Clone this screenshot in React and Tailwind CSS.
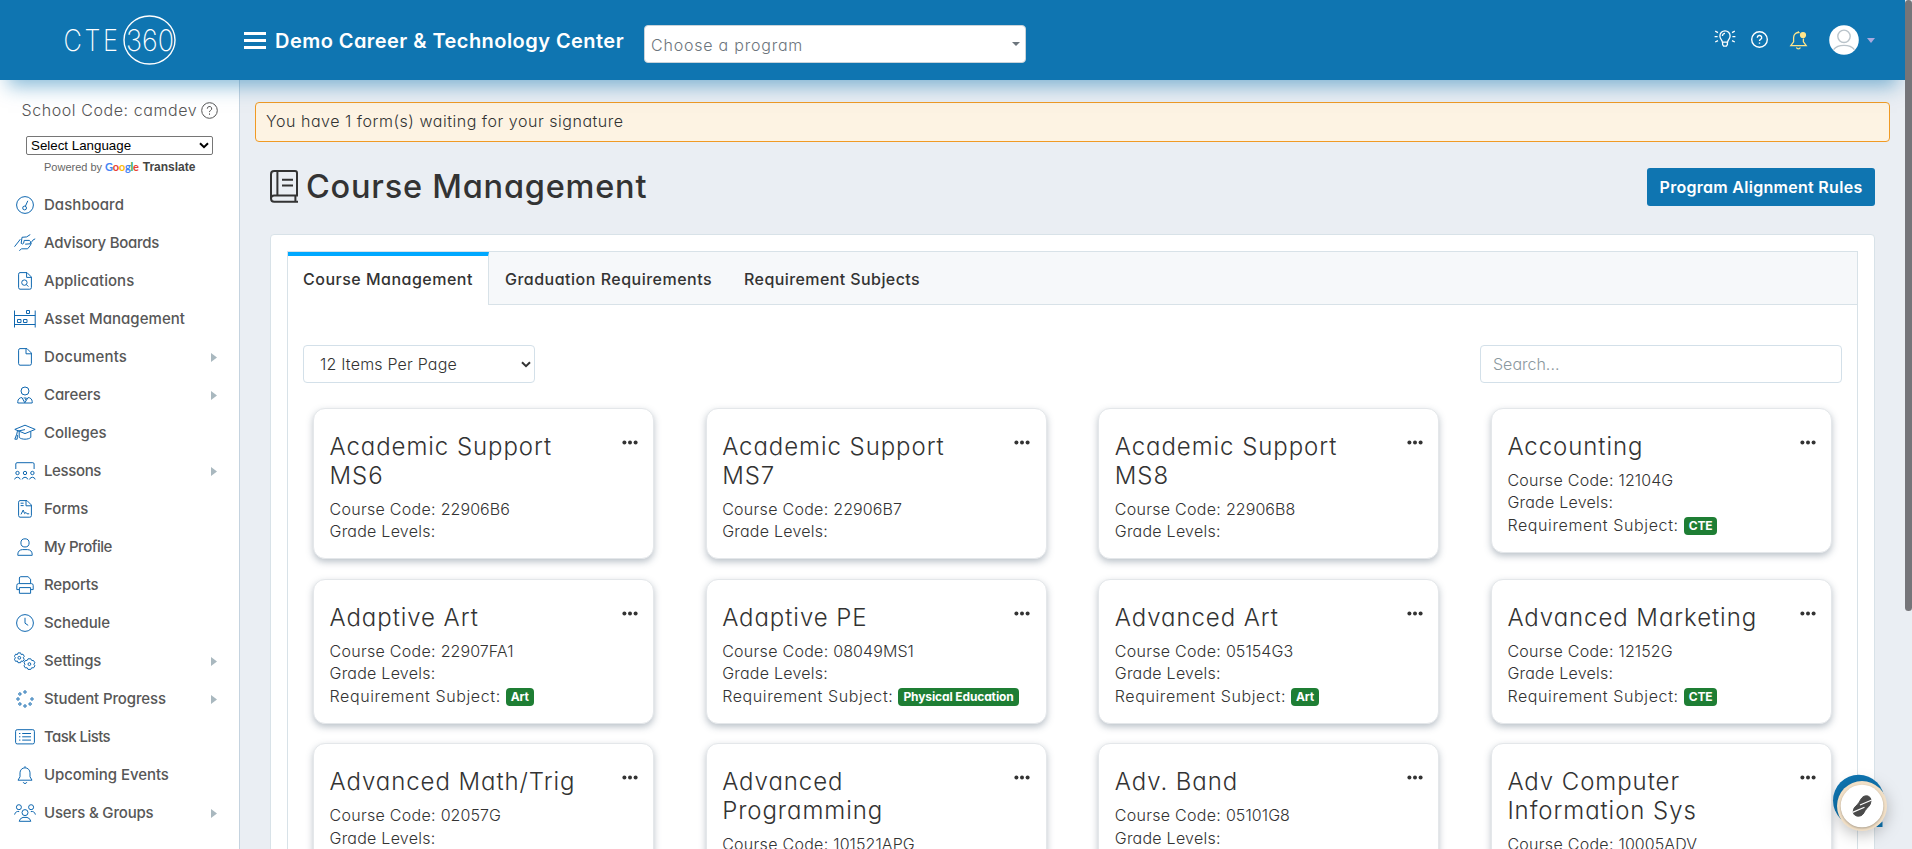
import React from "react";

const ICONS = {
  gauge: (
    <>
      <circle cx="11" cy="9" r="8.4" />
      <circle cx="10.6" cy="12" r="1.9" />
      <path d="M11.4 10.2 13.8 4.8" />
    </>
  ),
  hands: (
    <>
      <path d="M.5 12.7 5 7 6.3 5.2M8 3.3 12.7 2.9 16.3.5M17.7 7.9 18.8 6.2 21.2 4.8M5.3 16.6 7.6 14.8H13.6L16.3 11.5 17.5 8.5" />
      <path d="M8 3.3 7.2 9.3 8.4 10 9.6 9.3 10.2 6.4H15.4L16.6 7.8 16.2 9.8 11.2 10.2" />
    </>
  ),
  fileSearch: (
    <>
      <path d="M6 .6H13L17.4 5V15.6A1.6 1.6 0 0 1 15.8 17.2H6A1.6 1.6 0 0 1 4.6 15.6V2.2A1.6 1.6 0 0 1 6 .6ZM12.6.8V5.4H17.2" />
      <circle cx="10.4" cy="10.6" r="2.7" />
      <path d="M12.4 12.6 14.4 14.6" />
    </>
  ),
  shelves: (
    <>
      <path d="M.5.5V17.5M21.2.5V17.5M.5 5.5H21.2M.5 14.5H21.2" />
      <path d="M12.5.5H15.5V3.5H12.5ZM3.5 9.5H7V12.5H3.5ZM9.5 9.5H13V12.5H9.5Z" />
    </>
  ),
  file: (
    <path d="M6 .6H13L17.4 5V15.6A1.6 1.6 0 0 1 15.8 17.2H6A1.6 1.6 0 0 1 4.6 15.6V2.2A1.6 1.6 0 0 1 6 .6ZM12 .8V5.8H17.2" />
  ),
  tie: (
    <>
      <circle cx="11" cy="5" r="4" />
      <path d="M3.8 17V15.6A4 4 0 0 1 8 11.6L10.8 16.8 14 11.6A4 4 0 0 1 18.2 15.6V17ZM9.6 12H12.4L11.2 14.4" />
    </>
  ),
  grad: (
    <>
      <path d="M.8 5.4 11 1.2 21.2 5.4 11 9.6Z" />
      <path d="M5.2 7.6V13.4C7.6 15.8 14.4 15.8 16.8 13.4V7.6M11 5.6 3.4 7.2 2.6 11M2.4 11 .8 15.2H3.2L3.4 11" />
    </>
  ),
  lessons: (
    <>
      <path d="M1.8 7V2A1.3 1.3 0 0 1 3 .7H18.8A1.3 1.3 0 0 1 20.1 2V7" />
      <circle cx="3.5" cy="11" r="1.7" />
      <circle cx="11" cy="11" r="1.7" />
      <circle cx="18.4" cy="11" r="1.7" />
      <path d="M.6 17.4A2.9 2.9 0 0 1 6.2 17.4M8.2 17.4A2.9 2.9 0 0 1 13.8 17.4M15.6 17.4A2.9 2.9 0 0 1 21.2 17.4" />
    </>
  ),
  form: (
    <>
      <path d="M6 .6H13L17.4 5V15.6A1.6 1.6 0 0 1 15.8 17.2H6A1.6 1.6 0 0 1 4.6 15.6V2.2A1.6 1.6 0 0 1 6 .6ZM12 .8V5.8H17.2" />
      <path d="M6.6 3.2H9.6M6.6 5.6H9.6M7 14.4 9.2 10 10.6 13.6 12 12.4 13 13.8H15.2" />
    </>
  ),
  user: (
    <>
      <circle cx="11" cy="4.9" r="4.1" />
      <path d="M3.8 17.3V16.2A5 5 0 0 1 8.6 11.6H13.4A5 5 0 0 1 18.2 16.2V17.3Z" />
    </>
  ),
  printer: (
    <>
      <path d="M5.4 7V2A1.4 1.4 0 0 1 6.8.7H14L16.6 3.2V7" />
      <path d="M5 13.6H2.8V9.4A1.8 1.8 0 0 1 4.6 7.6H17.4A1.8 1.8 0 0 1 19.2 9.4V13.6H17M5.4 11.6H16.6V17.3H5.4Z" />
    </>
  ),
  clock: (
    <>
      <circle cx="11" cy="9" r="8.4" />
      <path d="M11 3.8V9.2L14.2 11.4" />
    </>
  ),
  gears: (
    <>
      <path d="M4 .9H6.6L7.2 2.6 9 2.2 10.3 4.4 9.2 5.8 10.3 7.2 9 9.4 7.2 9 6.6 10.7H4L3.4 9 1.6 9.4.4 7.2 1.5 5.8.4 4.4 1.6 2.2 3.4 2.6Z" />
      <circle cx="5.3" cy="5.8" r="1.4" />
      <path d="M11.2 8.6 13.2 8.4 14 6.8H16.8L17.6 8.4 19.6 8.6 20.9 10.8 19.8 12.2 20.9 13.8 19.6 15.8 17.6 15.8 16.8 17.4H14L13.2 15.8 11.2 15.8 10 13.8 11 12.2 10 10.8Z" />
      <circle cx="15.4" cy="12.1" r="1.4" />
    </>
  ),
  dots: (
    <>
      <circle cx="11" cy="2" r="1.2" />
      <circle cx="5.9" cy="4" r="1.2" />
      <circle cx="4" cy="9" r="1.2" />
      <circle cx="5.9" cy="14" r="1.2" />
      <circle cx="11" cy="16" r="1.2" />
      <circle cx="16.1" cy="14" r="1.2" />
      <circle cx="18" cy="9" r="1.2" />
    </>
  ),
  list: (
    <>
      <rect x="1.6" y="1.7" width="18.8" height="14.2" rx="1.6" />
      <path d="M8.2 5.5H17M8.2 8.8H17M8.2 12.1H17M5 5.5H6.4M5 8.8H6.4M5 12.1H6.4" />
    </>
  ),
  bell: (
    <>
      <path d="M11 .2V1.6M4 14.2 6 10.8V6.8A5 5 0 0 1 16 6.8V10.8L18 14.2Z" />
      <path d="M9.2 16.2A1.9 1.9 0 0 0 12.8 16.2" />
    </>
  ),
  users: (
    <>
      <circle cx="4.9" cy="3.2" r="2.5" />
      <circle cx="17.1" cy="3.2" r="2.5" />
      <circle cx="11" cy="8.6" r="3" />
      <path d="M.6 10.6A3.6 3.6 0 0 1 5.2 7.6M21.4 10.6A3.6 3.6 0 0 0 16.8 7.6M5.2 17.3A5 5 0 0 1 9 13.4H13A5 5 0 0 1 16.8 17.3Z" />
    </>
  ),
};

const NAV = [
  ["gauge", "Dashboard", false, "tracking-[0.003em]"],
  ["hands", "Advisory Boards", false, "tracking-[-0.018em]"],
  ["fileSearch", "Applications", false, "tracking-[0.003em]"],
  ["shelves", "Asset Management", false, "tracking-[0.003em]"],
  ["file", "Documents", true, "tracking-[0.009em]"],
  ["tie", "Careers", true, "tracking-[-0.005em]"],
  ["grad", "Colleges", false, "tracking-[0em]"],
  ["lessons", "Lessons", true, "tracking-[-0.025em]"],
  ["form", "Forms", false, "tracking-[-0.005em]"],
  ["user", "My Profile", false, "tracking-[-0.032em]"],
  ["printer", "Reports", false, "tracking-[-0.012em]"],
  ["clock", "Schedule", false, "tracking-[-0.01em]"],
  ["gears", "Settings", true, "tracking-[-0.01em]"],
  ["dots", "Student Progress", true, "tracking-[-0.009em]"],
  ["list", "Task Lists", false, "tracking-[-0.038em]"],
  ["bell", "Upcoming Events", false, "tracking-[-0.004em]"],
  ["users", "Users & Groups", true, "tracking-[-0.011em]"],
];

const COURSES = [
  [["Academic Support", "MS6"], "22906B6"],
  [["Academic Support", "MS7"], "22906B7"],
  [["Academic Support", "MS8"], "22906B8"],
  [["Accounting"], "12104G", "CTE"],
  [["Adaptive Art"], "22907FA1", "Art"],
  [["Adaptive PE"], "08049MS1", "Physical Education"],
  [["Advanced Art"], "05154G3", "Art"],
  [["Advanced Marketing"], "12152G", "CTE"],
  [["Advanced Math/Trig"], "02057G", "Math"],
  [["Advanced", "Programming"], "101521APG", "CTE"],
  [["Adv. Band"], "05101G8", "Art"],
  [["Adv Computer", "Information Sys"], "10005ADV", "CTE"],
];

function Logo() {
  return (
    <svg className="h-[50px] w-[112px] overflow-visible" viewBox="0 0 112 50" fill="none">
      <ellipse cx="85.5" cy="25" rx="25.5" ry="24" stroke="white" strokeWidth="1.4" />
      <g fill="#fff" fontFamily="Inter, sans-serif" fontWeight="200" fontSize="29.5">
        <text x="-0.5" y="36" textLength="57" lengthAdjust="spacingAndGlyphs" letterSpacing="3">CTE</text>
        <text x="62" y="36" textLength="48" lengthAdjust="spacingAndGlyphs">360</text>
      </g>
    </svg>
  );
}

function Question({ className }) {
  return (
    <svg className={className} viewBox="0 0 17 17" fill="none" stroke="currentColor">
      <circle cx="8.5" cy="8.5" r="7.8" />
      <path d="M6.3 6.7A2.2 2.1 0 1 1 9.6 8.4C8.8 8.8 8.5 9.1 8.5 10.1M8.5 11.4V12.8" />
    </svg>
  );
}

function Chevron({ className }) {
  return (
    <svg className={className} viewBox="0 0 10 7" fill="none" stroke="currentColor" strokeWidth="2">
      <path d="M1 1.2 5 5.2 9 1.2" />
    </svg>
  );
}

function Header() {
  return (
    <header className="relative z-10 flex h-20 w-[1905px] shrink-0 items-center bg-[#0f75b1] shadow-[0_14px_18px_-8px_rgba(15,117,177,0.5)]">
      <div className="flex w-[244px] pl-[64px]">
        <Logo />
      </div>
      <div className="flex h-[17px] w-[22px] flex-col justify-between">
        <span className="h-[3px] bg-white" />
        <span className="h-[3px] bg-white" />
        <span className="h-[3px] bg-white" />
      </div>
      <h1 className="ml-[9px] mt-[2px] w-[369px] whitespace-nowrap text-[20px] font-semibold tracking-[0.0225em] text-white">
        Demo Career &amp; Technology Center
      </h1>
      <div className="mt-2 flex h-[38px] w-[382px] items-center justify-between rounded border border-[#c9d3da] bg-white pl-[6px] pr-[5px] text-[#6c757d]">
        <span className="mt-[2px] text-base font-light tracking-[0.049em]">Choose a program</span>
        <svg className="h-[4px] w-2" viewBox="0 0 8 4" fill="currentColor">
          <path d="M0 0H8L4 4Z" />
        </svg>
      </div>
      <div className="ml-auto flex items-center pr-[30px] text-white">
        <svg className="-mt-[3px] h-[17px] w-[22px]" viewBox="0 0 22 17" fill="none" stroke="currentColor" strokeWidth="1.3">
          <path d="M8.4 12.2C8.2 10 5.9 9 5.9 5.9A5 5 0 0 1 16.1 5.9C16.1 9 13.8 10 13.6 12.2ZM8.6 12.4V14.6L9.6 16.2H12.4L13.4 14.6V12.4M8.4 6A2.6 2.6 0 0 1 11 3.4" />
          <path d="M1.2 1.2 4 2.6M.6 6.6H3.6M1.2 12 4 10.6M20.8 1.2 18 2.6M21.4 6.6H18.4M20.8 12 18 10.6" />
        </svg>
        <Question className="-mt-[2px] ml-[15px] h-[17px] w-[17px] stroke-[1.4]" />
        <svg className="ml-[22px] h-[19px] w-[17px] overflow-visible text-[#ffe58a]" viewBox="0 0 17 19" fill="none" stroke="currentColor" strokeWidth="1.3">
          <path d="M9.6 1.6A5 5 0 0 0 3.6 6.4V10.8L.8 14.6H16.2L13.4 10.8V7.4M6.4 16.6A2.2 2.2 0 0 0 10.4 16.6M8.3.2V1.4" />
          <circle cx="13" cy="4" r="3.1" fill="currentColor" stroke="none" />
        </svg>
        <svg className="ml-[22px] h-[30px] w-[30px]" viewBox="0 0 30 30" fill="none">
          <circle cx="15" cy="15" r="14.8" fill="white" />
          <circle cx="15" cy="11.3" r="6.2" stroke="#b9c3ca" strokeWidth="1.4" />
          <path d="M4.6 24.6C6.8 21.8 10.2 20.4 15 20.4S23.2 21.8 25.4 24.6" stroke="#b9c3ca" strokeWidth="1.4" />
        </svg>
        <svg className="ml-[8px] h-[5px] w-2 text-[#a9a9de]" viewBox="0 0 8 5" fill="currentColor">
          <path d="M0 0H8L4 5Z" />
        </svg>
      </div>
    </header>
  );
}

function Sidebar() {
  return (
    <aside className="w-[240px] shrink-0 border-r border-[#c5d3df] bg-white">
      <div className="mt-[18px] flex h-6 items-center gap-[4px] pl-[21.5px] text-base font-light tracking-[0.036em] text-[#555]">
        <span className="whitespace-nowrap">School Code: camdev</span>
        <Question className="h-[17px] w-[17px]" />
      </div>
      <div className="ml-[26px] mt-[14px] flex h-[19px] w-[187px] items-center justify-between rounded-[2px] border border-[#767676] pl-1 pr-[3px] font-['Liberation_Sans',sans-serif] text-[13.33px] text-black">
        <span>Select Language</span>
        <Chevron className="h-[7px] w-[10px]" />
      </div>
      <div className="ml-[44px] mt-[4px] flex h-4 items-center font-['Liberation_Sans',sans-serif] text-[11px] text-[#666]">
        <span className="whitespace-nowrap">Powered by</span>
        <span className="ml-[3px] font-['Lato',sans-serif] text-[11px] font-bold tracking-[-0.02em]">
          <span className="text-[#4285f4]">G</span>
          <span className="text-[#ea4335]">o</span>
          <span className="text-[#fbbc05]">o</span>
          <span className="text-[#4285f4]">g</span>
          <span className="text-[#34a853]">l</span>
          <span className="text-[#ea4335]">e</span>
        </span>
        <span className="ml-1 text-[12px] font-bold text-[#444]">Translate</span>
      </div>
      <nav className="mt-[11px]">
        {NAV.map(([icon, label, more, track]) => (
          <div key={label} className="flex h-[38px] items-center pl-[14px]">
            <svg className="h-[18px] w-[22px] text-[#1068b0]" viewBox="0 0 22 18" fill="none" stroke="currentColor" strokeWidth="1">
              {ICONS[icon]}
            </svg>
            <span className={"ml-2 mt-px whitespace-nowrap text-[15px] font-medium text-[#575757] " + track}>{label}</span>
            {more && (
              <svg className="ml-auto mr-[22px] h-[9px] w-[6px]" viewBox="0 0 6 9" fill="#a9b8bf">
                <path d="M0 0 6 4.5 0 9Z" />
              </svg>
            )}
          </div>
        ))}
      </nav>
    </aside>
  );
}

function Card({ title, code, subject }) {
  return (
    <article className="flex items-start justify-between rounded-xl border border-[#e4e7ea] bg-white px-[15.5px] pb-[16px] pt-[24px] shadow-[0_3px_7px_rgba(60,80,100,0.35)]">
      <div className="min-w-0 flex-1">
        <h3 className="mb-[7px] text-[24px] font-light leading-[28.8px] tracking-[0.039em]">
          {title.map((line) => (
            <div key={line} className="whitespace-nowrap">{line}</div>
          ))}
        </h3>
        <div className="text-base font-light leading-[22.4px] tracking-[0.038em]">
          <div>
            <span className="tracking-[0.018em]">Course Code: </span>
            <span className="tracking-[0.005em]">{code}</span>
          </div>
          <div className="tracking-[0.015em]">Grade Levels:</div>
          {subject && (
            <div className="flex items-center whitespace-nowrap">
              Requirement Subject:
              <span className="ml-[5px] mt-[3px] flex h-[18px] items-center rounded bg-[#1e7e34] px-[5px] text-[12px] font-bold tracking-[-0.01em] text-white">
                {subject}
              </span>
            </div>
          )}
        </div>
      </div>
      <svg className="-ml-4 mt-[7px] h-[5px] w-[16px] shrink-0" viewBox="0 0 16 5" fill="#333">
        <circle cx="2.4" cy="2.5" r="2" />
        <circle cx="8" cy="2.5" r="2" />
        <circle cx="13.6" cy="2.5" r="2" />
      </svg>
    </article>
  );
}

function Main() {
  return (
    <main className="w-[1665px] shrink-0 pt-[22px] text-[#333]">
      <div className="ml-[15px] flex h-10 w-[1635px] items-center rounded border border-[#f09a24] bg-[#fdf3e3] pb-[2px] pl-[10px] text-base font-light tracking-[0.033em]">
        You have 1 form(s) waiting for your signature
      </div>
      <div className="ml-[30px] mr-[30px] mt-[26px] flex h-[38px] items-center">
        <svg className="-mt-[2px] h-[33px] w-7" viewBox="0 0 28 33" fill="none" stroke="#333" strokeWidth="2">
          <path d="M28 25.5H4.2C2.4 25.5 1 26.8 1 28.6S2.4 31.8 4.2 31.8H28M1 28.6V4.2C1 2.4 2.4 1 4.2 1H25C26.2 1 27 1.8 27 3V25.5M7.4 1V25.5M25.4 25.5V31.8M12 9.8H23M12 15.6H23" />
        </svg>
        <h2 className="ml-[8px] mt-px text-[32.5px] font-medium tracking-[0.024em]">Course Management</h2>
        <button className="ml-auto h-[38px] w-[228px] whitespace-nowrap rounded-[3px] bg-[#0f75b1] text-base font-semibold tracking-[0.018em] text-white">
          Program Alignment Rules
        </button>
      </div>
      <section className="mx-[30px] mt-[28px] h-[700px] rounded border border-[#d8e2e8] bg-white p-4">
        <div className="h-[680px] border border-[#d8e2e8]">
          <div className="flex h-[53px] border-b border-[#d8e2e8] bg-[#f6f8fa] text-base font-medium">
            <div className="-mb-px w-[201px] border-r border-t-4 border-r-[#d8e2e8] border-t-[#00a8ff] bg-white pl-[15px] pt-[11px] tracking-[0.031em]">
              Course Management
            </div>
            <div className="w-[239px] whitespace-nowrap pl-4 pt-[15px] tracking-[0.031em]">Graduation Requirements</div>
            <div className="whitespace-nowrap pl-4 pt-[15px] tracking-[0.026em]">Requirement Subjects</div>
          </div>
          <div className="mx-[15px] mt-[40px] flex h-[38px] justify-between text-base font-light">
            <div className="flex w-[232px] items-center justify-between rounded border border-[#d3e0e9] pl-4 pr-[3px] tracking-[0.012em]">
              <span>12 Items Per Page</span>
              <Chevron className="h-[7px] w-[10px]" />
            </div>
            <div className="flex w-[362px] items-center rounded border border-[#d3e0e9] pb-px pl-3 text-[#8b989e]">Search...</div>
          </div>
          <div className="mx-[25px] mt-[25px] grid grid-cols-4 items-start gap-x-[51.5px] gap-y-[19.5px]">
            {COURSES.map(([title, code, subject]) => (
              <Card key={code} title={title} code={code} subject={subject} />
            ))}
          </div>
        </div>
      </section>
    </main>
  );
}

export default function App() {
  return (
    <div className="relative flex h-[849px] w-[1912px] flex-col overflow-hidden bg-[#eaeef3] font-['Inter',sans-serif] [font-feature-settings:'cv11']">
      <Header />
      <div className="flex min-h-0 flex-1">
        <Sidebar />
        <Main />
      </div>
      <div className="absolute right-0 top-0 z-20 h-[611px] w-[7px] rounded bg-[#757579]" />
      <svg className="absolute left-[1820px] top-[762px] z-20 h-[87px] w-[85px] overflow-visible" viewBox="0 0 85 87">
        <circle cx="38.7" cy="38.5" r="25.7" fill="#0f75b1" />
        <path d="M56 65H62.5V59.5Z" fill="#0f75b1" />
        <circle cx="42" cy="44" r="25" fill="#f1dfc6" className="drop-shadow-[0_4px_8px_rgba(0,0,0,0.25)]" />
        <circle cx="42" cy="44" r="21.3" fill="#fff" className="drop-shadow-[0_1px_1px_rgba(0,0,0,0.3)]" />
        <path d="M46.5 33.8C49 33.8 51.3 36 51 39 50.7 44 47 45.5 45.2 48.5 43.8 51 42.5 54.2 38.6 54.2 35.5 54.2 33 52.4 33.2 49.4 33.5 44.5 37.6 43.4 39.4 40 40.8 37.2 42.5 33.8 46.5 33.8Z" fill="#4a4a4a" stroke="#4a4a4a" strokeWidth="1" />
        <path d="M40 43 51.8 38M32.5 50.4 44.5 45.2" stroke="#fff" strokeWidth="1.2" />
      </svg>
    </div>
  );
}
